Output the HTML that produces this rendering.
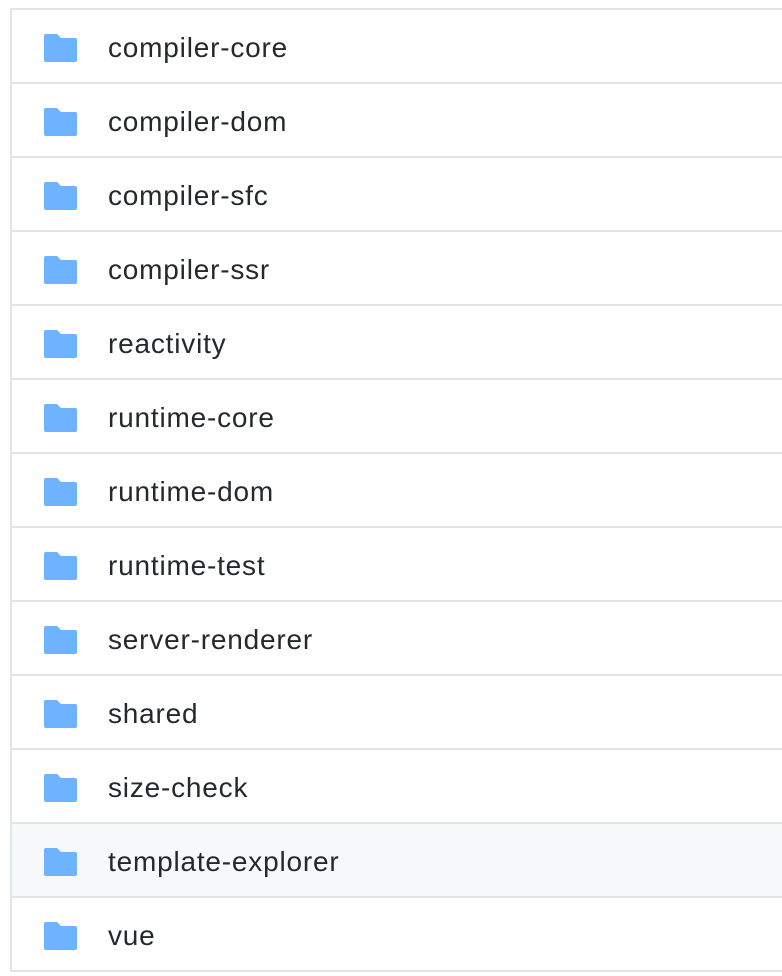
<!DOCTYPE html>
<html><head><style>
html,body{margin:0;padding:0;width:782px;height:976px;overflow:hidden;background:#fff;}
.wrap{position:absolute;left:10px;top:8px;width:772px;border-left:2px solid #e1e4e8;border-top:2px solid #e1e4e8;}
.row{position:relative;height:72px;border-bottom:2px solid #e1e4e8;}
.row.h{background:#f6f8fa;}
.row svg{position:absolute;left:32px;top:24px;}
.row span{position:absolute;left:96px;top:1px;line-height:74px;font-family:"Liberation Sans",Helvetica,Arial,sans-serif;font-size:28px;letter-spacing:0.8px;color:#24292e;}
</style></head><body>
<div class="wrap">
<div class="row"><svg width="33" height="28" viewBox="0 0 33 28"><path d="M2 0h11l4 4h14a2 2 0 0 1 2 2v20a2 2 0 0 1-2 2H2a2 2 0 0 1-2-2V2a2 2 0 0 1 2-2z" fill="#6db3ff"/></svg><span>compiler-core</span></div>
<div class="row"><svg width="33" height="28" viewBox="0 0 33 28"><path d="M2 0h11l4 4h14a2 2 0 0 1 2 2v20a2 2 0 0 1-2 2H2a2 2 0 0 1-2-2V2a2 2 0 0 1 2-2z" fill="#6db3ff"/></svg><span>compiler-dom</span></div>
<div class="row"><svg width="33" height="28" viewBox="0 0 33 28"><path d="M2 0h11l4 4h14a2 2 0 0 1 2 2v20a2 2 0 0 1-2 2H2a2 2 0 0 1-2-2V2a2 2 0 0 1 2-2z" fill="#6db3ff"/></svg><span>compiler-sfc</span></div>
<div class="row"><svg width="33" height="28" viewBox="0 0 33 28"><path d="M2 0h11l4 4h14a2 2 0 0 1 2 2v20a2 2 0 0 1-2 2H2a2 2 0 0 1-2-2V2a2 2 0 0 1 2-2z" fill="#6db3ff"/></svg><span>compiler-ssr</span></div>
<div class="row"><svg width="33" height="28" viewBox="0 0 33 28"><path d="M2 0h11l4 4h14a2 2 0 0 1 2 2v20a2 2 0 0 1-2 2H2a2 2 0 0 1-2-2V2a2 2 0 0 1 2-2z" fill="#6db3ff"/></svg><span>reactivity</span></div>
<div class="row"><svg width="33" height="28" viewBox="0 0 33 28"><path d="M2 0h11l4 4h14a2 2 0 0 1 2 2v20a2 2 0 0 1-2 2H2a2 2 0 0 1-2-2V2a2 2 0 0 1 2-2z" fill="#6db3ff"/></svg><span>runtime-core</span></div>
<div class="row"><svg width="33" height="28" viewBox="0 0 33 28"><path d="M2 0h11l4 4h14a2 2 0 0 1 2 2v20a2 2 0 0 1-2 2H2a2 2 0 0 1-2-2V2a2 2 0 0 1 2-2z" fill="#6db3ff"/></svg><span>runtime-dom</span></div>
<div class="row"><svg width="33" height="28" viewBox="0 0 33 28"><path d="M2 0h11l4 4h14a2 2 0 0 1 2 2v20a2 2 0 0 1-2 2H2a2 2 0 0 1-2-2V2a2 2 0 0 1 2-2z" fill="#6db3ff"/></svg><span>runtime-test</span></div>
<div class="row"><svg width="33" height="28" viewBox="0 0 33 28"><path d="M2 0h11l4 4h14a2 2 0 0 1 2 2v20a2 2 0 0 1-2 2H2a2 2 0 0 1-2-2V2a2 2 0 0 1 2-2z" fill="#6db3ff"/></svg><span>server-renderer</span></div>
<div class="row"><svg width="33" height="28" viewBox="0 0 33 28"><path d="M2 0h11l4 4h14a2 2 0 0 1 2 2v20a2 2 0 0 1-2 2H2a2 2 0 0 1-2-2V2a2 2 0 0 1 2-2z" fill="#6db3ff"/></svg><span>shared</span></div>
<div class="row"><svg width="33" height="28" viewBox="0 0 33 28"><path d="M2 0h11l4 4h14a2 2 0 0 1 2 2v20a2 2 0 0 1-2 2H2a2 2 0 0 1-2-2V2a2 2 0 0 1 2-2z" fill="#6db3ff"/></svg><span>size-check</span></div>
<div class="row h"><svg width="33" height="28" viewBox="0 0 33 28"><path d="M2 0h11l4 4h14a2 2 0 0 1 2 2v20a2 2 0 0 1-2 2H2a2 2 0 0 1-2-2V2a2 2 0 0 1 2-2z" fill="#6db3ff"/></svg><span>template-explorer</span></div>
<div class="row"><svg width="33" height="28" viewBox="0 0 33 28"><path d="M2 0h11l4 4h14a2 2 0 0 1 2 2v20a2 2 0 0 1-2 2H2a2 2 0 0 1-2-2V2a2 2 0 0 1 2-2z" fill="#6db3ff"/></svg><span>vue</span></div>
</div>
</body></html>
